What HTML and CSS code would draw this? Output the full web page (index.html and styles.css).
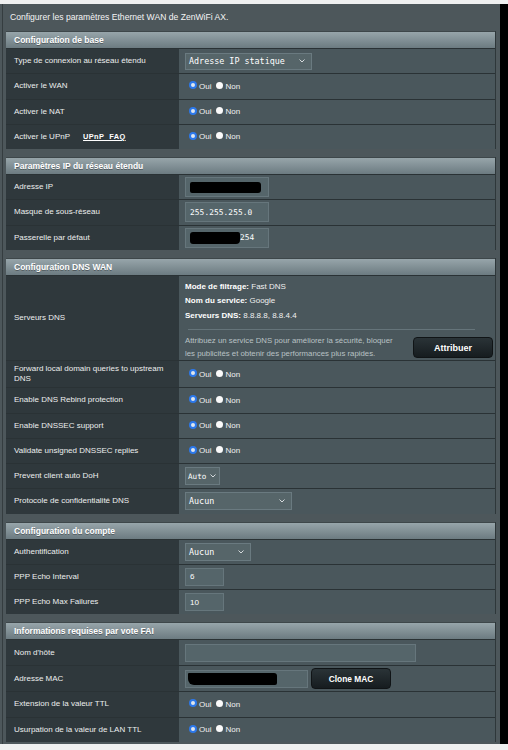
FILE: index.html
```html
<!DOCTYPE html>
<html lang="fr">
<head>
<meta charset="utf-8">
<title>WAN</title>
<link rel="stylesheet" href="styles.css">
</head>
<body>
<div class="page">
  <div class="title">Configurer les paramètres Ethernet WAN de ZenWiFi AX.</div>

  <section class="sec">
    <div class="sec-head">Configuration de base</div>
    <div class="row">
      <div class="lbl">Type de connexion au réseau étendu</div>
      <div class="val"><span class="sel w-wan">Adresse IP statique<svg class="chev" viewBox="0 0 6 4"><polyline points="0.5,0.5 3,3 5.5,0.5"/></svg></span></div>
    </div>
    <div class="row">
      <div class="lbl">Activer le WAN</div>
      <div class="val"><span class="radio"><span class="dot on"></span>Oui</span><span class="radio"><span class="dot"></span>Non</span></div>
    </div>
    <div class="row">
      <div class="lbl">Activer le NAT</div>
      <div class="val"><span class="radio"><span class="dot on"></span>Oui</span><span class="radio"><span class="dot"></span>Non</span></div>
    </div>
    <div class="row">
      <div class="lbl">Activer le UPnP <a class="faq">UPnP&nbsp;&nbsp;FAQ</a></div>
      <div class="val"><span class="radio"><span class="dot on"></span>Oui</span><span class="radio"><span class="dot"></span>Non</span></div>
    </div>
  </section>

  <section class="sec">
    <div class="sec-head">Paramètres IP du réseau étendu</div>
    <div class="row">
      <div class="lbl">Adresse IP</div>
      <div class="val"><span class="inp tall w-ip"><span class="blot b-ip"></span></span></div>
    </div>
    <div class="row">
      <div class="lbl">Masque de sous-réseau</div>
      <div class="val"><span class="inp tall w-ip mono">255.255.255.0</span></div>
    </div>
    <div class="row">
      <div class="lbl">Passerelle par défaut</div>
      <div class="val"><span class="inp tall w-ip mono"><span class="blot b-gw"></span>254</span></div>
    </div>
  </section>

  <section class="sec">
    <div class="sec-head">Configuration DNS WAN</div>
    <div class="row dns-row">
      <div class="lbl">Serveurs DNS</div>
      <div class="val dns">
        <div class="dns-line"><b>Mode de filtrage:</b> Fast DNS</div>
        <div class="dns-line"><b>Nom du service:</b> Google</div>
        <div class="dns-line"><b>Serveurs DNS:</b> 8.8.8.8, 8.8.4.4</div>
        <div class="dns-sep"></div>
        <div class="dns-foot">
          <p class="dns-desc">Attribuez un service DNS pour améliorer la sécurité, bloquer les publicités et obtenir des performances plus rapides.</p>
          <span class="btn btn-attr">Attribuer</span>
        </div>
      </div>
    </div>
    <div class="row two">
      <div class="lbl">Forward local domain queries to upstream DNS</div>
      <div class="val"><span class="radio"><span class="dot on"></span>Oui</span><span class="radio"><span class="dot"></span>Non</span></div>
    </div>
    <div class="row">
      <div class="lbl">Enable DNS Rebind protection</div>
      <div class="val"><span class="radio"><span class="dot on"></span>Oui</span><span class="radio"><span class="dot"></span>Non</span></div>
    </div>
    <div class="row">
      <div class="lbl">Enable DNSSEC support</div>
      <div class="val"><span class="radio"><span class="dot on"></span>Oui</span><span class="radio"><span class="dot"></span>Non</span></div>
    </div>
    <div class="row">
      <div class="lbl">Validate unsigned DNSSEC replies</div>
      <div class="val"><span class="radio"><span class="dot on"></span>Oui</span><span class="radio"><span class="dot"></span>Non</span></div>
    </div>
    <div class="row">
      <div class="lbl">Prevent client auto DoH</div>
      <div class="val"><span class="sel w-doh">Auto<svg class="chev" viewBox="0 0 6 4"><polyline points="0.5,0.5 3,3 5.5,0.5"/></svg></span></div>
    </div>
    <div class="row">
      <div class="lbl">Protocole de confidentialité DNS</div>
      <div class="val"><span class="sel w-proto">Aucun<svg class="chev" viewBox="0 0 6 4"><polyline points="0.5,0.5 3,3 5.5,0.5"/></svg></span></div>
    </div>
  </section>

  <section class="sec">
    <div class="sec-head">Configuration du compte</div>
    <div class="row">
      <div class="lbl">Authentification</div>
      <div class="val"><span class="sel w-auth">Aucun<svg class="chev" viewBox="0 0 6 4"><polyline points="0.5,0.5 3,3 5.5,0.5"/></svg></span></div>
    </div>
    <div class="row">
      <div class="lbl">PPP Echo Interval</div>
      <div class="val"><span class="inp w-ppp">6</span></div>
    </div>
    <div class="row">
      <div class="lbl">PPP Echo Max Failures</div>
      <div class="val"><span class="inp w-ppp">10</span></div>
    </div>
  </section>

  <section class="sec last">
    <div class="sec-head">Informations requises par vote FAI</div>
    <div class="row r26">
      <div class="lbl">Nom d'hôte</div>
      <div class="val"><span class="inp w-host"></span></div>
    </div>
    <div class="row r26">
      <div class="lbl">Adresse MAC</div>
      <div class="val"><span class="inp w-mac"><span class="blot b-mac"></span></span><span class="btn btn-mac">Clone MAC</span></div>
    </div>
    <div class="row">
      <div class="lbl">Extension de la valeur TTL</div>
      <div class="val"><span class="radio"><span class="dot on"></span>Oui</span><span class="radio"><span class="dot"></span>Non</span></div>
    </div>
    <div class="row">
      <div class="lbl">Usurpation de la valeur de LAN TTL</div>
      <div class="val"><span class="radio"><span class="dot on"></span>Oui</span><span class="radio"><span class="dot"></span>Non</span></div>
    </div>
  </section>
</div>
</body>
</html>
```

FILE: styles.css
```css
html, body {
  margin: 0;
  padding: 0;
}

body {
  background: #eff0f0;
  font-family: "Liberation Sans", Arial, sans-serif;
  color: #fff;
}

.page {
  width: 490px;
  height: 740px;
  margin-top: 4px;
  padding: 0 4px 0 6px;
  border-right: 8px solid #000;
  background: linear-gradient(to right, #4d575b 0, #4d575b 2px, #353d40 2px, #353d40 3px, #4d575b 3px);
  overflow: hidden;
}

.title {
  height: 27px;
  display: flex;
  align-items: center;
  padding: 0 0 2px 4px;
  box-sizing: border-box;
  font-size: 8.6px;
  color: #f4f4f4;
}

.sec {
  border-right: 1px solid #2e373a;
  margin-bottom: 8px;
}

.sec-head {
  height: 17px;
  display: flex;
  align-items: center;
  padding-left: 8px;
  background: linear-gradient(#97a5aa, #6c7b81);
  border-top: 1px solid #3e474a;
  box-sizing: border-box;
  font-size: 8.5px;
  font-weight: bold;
  color: #fff;
  text-shadow: 0 1px 0 rgba(0, 0, 0, 0.35);
}

.row {
  display: grid;
  grid-template-columns: 173px 1fr;
  height: 25.25px;
  border-top: 1px solid #2a3235;
  box-sizing: border-box;
}

.row.r26 {
  height: 26px;
}

.row.two {
  height: 27px;
}

.row.dns-row {
  height: 85.5px;
}

.lbl {
  background: #2f383c;
  display: flex;
  align-items: center;
  padding: 0 4px 0 8px;
  font-size: 8px;
  color: #eceeee;
  line-height: 10px;
}

.val {
  background: #4a575c;
  display: flex;
  align-items: center;
  padding-left: 6px;
}

.faq {
  margin-left: 13px;
  font-size: 7.4px;
  font-weight: bold;
  letter-spacing: 0.4px;
  text-decoration: underline;
  color: #fff;
}

.radio {
  display: inline-flex;
  align-items: center;
  font-size: 8px;
  color: #f2f2f2;
}

.radio:first-child {
  margin-left: 4px;
  margin-right: 5px;
}

.dot {
  width: 7px;
  height: 7px;
  border-radius: 50%;
  background: #fafafa;
  box-sizing: border-box;
  margin: 0 2px 2px 0;
}

.dot.on {
  width: 8px;
  height: 8px;
  border: 2px solid #2c78ea;
  background: #dfe6ee;
}

.sel {
  height: 17px;
  display: flex;
  align-items: center;
  justify-content: space-between;
  padding: 0 6px 0 3px;
  box-sizing: border-box;
  background: #566569;
  border: 1px solid #6a7a80;
  font-family: "DejaVu Sans Mono", "Liberation Mono", monospace;
  font-size: 8.4px;
  color: #fff;
}

.chev {
  width: 6px;
  height: 4px;
  fill: none;
  stroke: #d5dadc;
  stroke-width: 1;
}

.w-wan { width: 127px; }
.w-doh { width: 35px; height: 18px; padding: 0 3px 0 2px; font-size: 7.6px; gap: 3px; }
.w-proto { width: 107px; height: 18px; }
.w-auth { width: 66px; height: 18px; }

.inp {
  height: 18px;
  display: flex;
  align-items: center;
  padding-left: 4px;
  box-sizing: border-box;
  background: #55656a;
  border: 1px solid #66767c;
  font-size: 8px;
  color: #fff;
}

.inp.tall {
  height: 20px;
}

.mono {
  font-family: "DejaVu Sans Mono", "Liberation Mono", monospace;
  font-size: 7.8px;
  letter-spacing: 0.1px;
}

.w-ip { width: 84px; }
.w-ppp { width: 39px; }
.w-host { width: 231px; }
.w-mac { width: 123px; padding-left: 2px; }

.blot {
  display: inline-block;
  background: #000;
}

.b-ip {
  width: 71px;
  height: 11px;
  border-radius: 2px 3px 3px 2px;
}

.b-gw {
  width: 50px;
  height: 12px;
  border-radius: 3px 2px 4px 3px;
}

.b-mac {
  width: 89px;
  height: 12px;
  border-radius: 1px 3px 2px 6px;
}

.dns {
  flex-direction: column;
  align-items: stretch;
  justify-content: flex-start;
  padding: 4px 0 0 6px;
}

.dns-line {
  height: 14.5px;
  line-height: 14.5px;
  font-size: 8px;
  color: #f0f0f0;
}

.dns-line b {
  color: #fff;
}

.dns-sep {
  height: 1px;
  margin: 6px 20px 0 3px;
  background: #65747a;
}

.dns-foot {
  display: flex;
  align-items: center;
  margin-top: 5px;
}

.dns-desc {
  margin: 0;
  width: 215px;
  font-size: 7.8px;
  line-height: 12.6px;
  color: #b9c2c5;
}

.btn {
  display: inline-flex;
  align-items: center;
  justify-content: center;
  height: 21px;
  border-radius: 4px;
  background: linear-gradient(#2a3337, #161c1f);
  border: 1px solid #101416;
  box-sizing: border-box;
  font-weight: bold;
  color: #fff;
}

.btn-attr {
  width: 80px;
  margin-left: auto;
  margin-right: 2px;
  font-size: 9px;
}

.btn-mac {
  width: 80px;
  margin-left: 3px;
  font-size: 8.4px;
}
```
